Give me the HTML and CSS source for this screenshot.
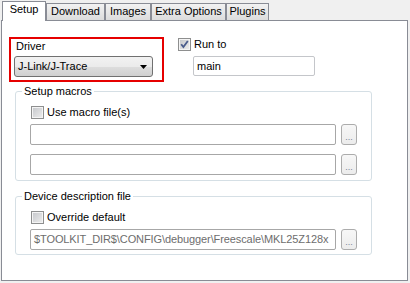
FILE: index.html
```html
<!DOCTYPE html>
<html lang="en">
<head>
  <meta charset="UTF-8" />
  <title>Debugger Setup</title>
  <link rel="stylesheet" href="styles.css">
</head>
<body>
  <div class="tabs">
    <div class="tab active tab-setup">Setup</div>
    <div class="tab tab-download">Download</div>
    <div class="tab tab-images">Images</div>
    <div class="tab tab-extra">Extra Options</div>
    <div class="tab tab-plugins">Plugins</div>
  </div>

  <div class="panel">
    <div class="top-row">
      <div class="driver-box">
        <div class="driver-label">Driver</div>
        <div class="combo">
          <span>J-Link/J-Trace</span>
          <svg class="arrow" width="7" height="4" viewBox="0 0 7 4"><path d="M0 0h7L3.5 4z" fill="#000"/></svg>
        </div>
      </div>
      <div class="run-to">
        <div class="check">
          <span class="box">
            <svg width="11" height="11" viewBox="0 0 11 11"><path d="M2.2 5.2 L4.4 8 L8.8 2" fill="none" stroke="#4a5c8c" stroke-width="1.8"/></svg>
          </span>
          <span>Run to</span>
        </div>
        <div class="field main-field">main</div>
      </div>
    </div>

    <div class="group group-macros">
      <div class="group-title">Setup macros</div>
      <div class="check"><span class="box"></span><span>Use macro file(s)</span></div>
      <div class="file-row">
        <div class="field"></div>
        <div class="browse">...</div>
      </div>
      <div class="file-row row-second">
        <div class="field"></div>
        <div class="browse">...</div>
      </div>
    </div>

    <div class="group group-device">
      <div class="group-title">Device description file</div>
      <div class="check"><span class="box"></span><span>Override default</span></div>
      <div class="file-row">
        <div class="field disabled"><span class="path">$TOOLKIT_DIR$\CONFIG\debugger\Freescale\MKL25Z128x</span></div>
        <div class="browse">...</div>
      </div>
    </div>
  </div>
</body>
</html>
```

FILE: styles.css
```css
* {
  box-sizing: border-box;
  margin: 0;
  padding: 0;
}

body {
  background-color: #f0f0f0;
  font-family: 'Liberation Sans', Arial, sans-serif;
  font-size: 11px;
  line-height: 13px;
  color: #000;
}

/* Tabs */

.tabs {
  display: flex;
  align-items: flex-end;
  height: 20px;
  padding-left: 2px;
}

.tab {
  height: 17px;
  padding-top: 1px;
  text-align: center;
  border: 1px solid #898c95;
  border-bottom: none;
  background: linear-gradient(#f2f2f2, #dcdcdc);
}

.tab.active {
  position: relative;
  z-index: 1;
  height: 20px;
  margin-bottom: -1px;
  background: #fff;
}

.tab-setup { width: 44px; }
.tab-download { width: 59px; }
.tab-images { width: 46px; }
.tab-extra { width: 75px; }
.tab-plugins { width: 43px; }

/* Panel */

.panel {
  width: 407px;
  height: 261px;
  margin-left: 1px;
  padding: 16px 0 0 7px;
  border: 1px solid #898c95;
  background: #fff;
}

.top-row {
  display: flex;
  align-items: flex-start;
}

.driver-box {
  width: 155px;
  height: 45px;
  padding: 1px 3px 0;
  border: 2px solid #e60000;
}

.driver-label {
  margin-left: 2px;
}

.combo {
  display: flex;
  align-items: center;
  justify-content: space-between;
  width: 139px;
  height: 21px;
  margin-top: 3px;
  padding: 0 5px 0 3px;
  border: 1px solid #707070;
  border-radius: 3px;
  background: linear-gradient(#f2f2f2 0%, #ebebeb 50%, #dddddd 51%, #cfcfcf 100%);
}

.run-to {
  margin-left: 14px;
  margin-top: 1px;
}

.check {
  display: flex;
  align-items: center;
  gap: 3px;
}

.box {
  display: inline-flex;
  align-items: center;
  justify-content: center;
  width: 13px;
  height: 13px;
  border: 1px solid #8e8f8f;
  background: linear-gradient(135deg, #c4c6ca, #eeeeee);
  box-shadow: inset 0 0 0 1px #f4f4f4;
}

.field {
  height: 21px;
  padding: 3px 0 0 3px;
  border: 1px solid #a7a7a7;
  border-radius: 2px;
  background: #fff;
  white-space: nowrap;
  overflow: hidden;
}

.main-field {
  width: 122px;
  height: 20px;
  margin: 5px 0 0 15px;
  border-color: #c4c6ca;
}

/* Groups */

.group {
  width: 357px;
  margin-left: 6px;
  padding: 0 14px 5px 14px;
  border: 1px solid #d5dfe5;
  border-radius: 3px;
}

.group-macros {
  margin-top: 9px;
}

.group-device {
  margin-top: 15px;
  padding-bottom: 4px;
}

.group-title {
  width: fit-content;
  margin: -7px 0 0 -8px;
  padding: 0 2px;
  background: #fff;
}

.group .check {
  margin: 8px 0 0 1px;
}

.file-row {
  display: flex;
  gap: 5px;
  margin-top: 5px;
}

.file-row.row-second {
  margin-top: 9px;
}

.file-row .field {
  width: 306px;
}

.field.disabled {
  color: #6d6d6d;
  letter-spacing: -0.1px;
}

.browse {
  width: 16px;
  height: 21px;
  border: 1px solid #acacac;
  border-radius: 3px;
  background: linear-gradient(#f7f7f7, #ececec);
  color: #7a8499;
  font-size: 9px;
  line-height: 9px;
  text-align: center;
  padding-top: 8px;
}
```
